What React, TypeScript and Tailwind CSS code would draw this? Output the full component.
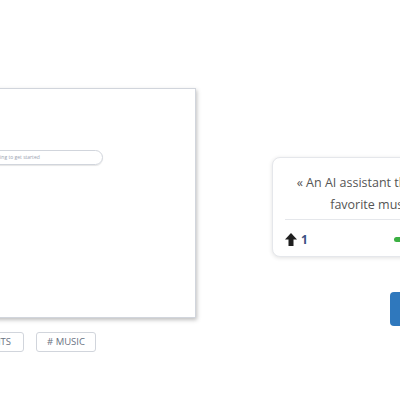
import React from "react";

export default function App() {
  return (
    <div
      className="w-[400px] h-[400px] overflow-hidden bg-white"
      style={{ fontFamily: '"Open Sans", "Liberation Sans", sans-serif' }}
    >
      <div className="flex items-start">
        {/* left column */}
        <div className="ml-[-60px] mt-[88px] flex flex-col shrink-0">
          <div className="w-[256px] h-[230px] bg-white border border-gray-300 shadow-[1px_2px_4px_rgba(0,0,0,0.25)] flex flex-col">
            <div className="mt-[61px] ml-[10px] w-[152px] h-[15px] rounded-full border border-gray-300 shadow-[0_1px_1px_rgba(0,0,0,0.1)] flex items-center pl-[6px]">
              <span className="ml-[12px] text-[5px] text-gray-400 whitespace-nowrap">Type something to get started</span>
            </div>
          </div>
          <div className="mt-[14px] flex gap-3">
            <div className="w-[84px] h-[20px] border border-gray-300 rounded-[3px] flex items-center justify-end px-3 text-[9.5px] text-gray-500 uppercase whitespace-nowrap">
              # Habits
            </div>
            <div className="w-[60px] h-[20px] border border-gray-300 rounded-[3px] flex items-center justify-center text-[9.5px] text-gray-500 uppercase whitespace-nowrap">
              # Music
            </div>
          </div>
        </div>

        {/* right column */}
        <div className="ml-[76px] mt-[157px] flex flex-col shrink-0">
          <div className="w-[250px] h-[100px] bg-white border border-gray-200 rounded-lg shadow-[0_1px_4px_rgba(0,0,0,0.12)] px-3 flex flex-col">
            <div className="pt-[14px] text-[12.5px] leading-[22px] text-[#555] text-center whitespace-nowrap">
              <div>« An AI assistant that plays all your</div>
              <div>favorite music for me »</div>
            </div>
            <div className="mt-[3px] border-t border-gray-200" />
            <div className="flex items-center mt-[13px]">
              <svg width="12" height="13" viewBox="0 0 12 13">
                <polygon points="0,6.5 6,0 12,6.5" fill="#1f1f1f" />
                <rect x="3.5" y="6" width="5" height="7" fill="#1f1f1f" />
              </svg>
              <span className="ml-[4px] text-[12px] font-bold text-[#3b5283] leading-none">1</span>
              <div className="ml-[86px] w-[40px] h-[5px] rounded-full bg-[#3cb043]" />
            </div>
          </div>
          <div className="mt-[35px] ml-[118px] w-[60px] h-[34px] rounded-[4px] bg-[#2f78bd]" />
        </div>
      </div>
    </div>
  );
}
